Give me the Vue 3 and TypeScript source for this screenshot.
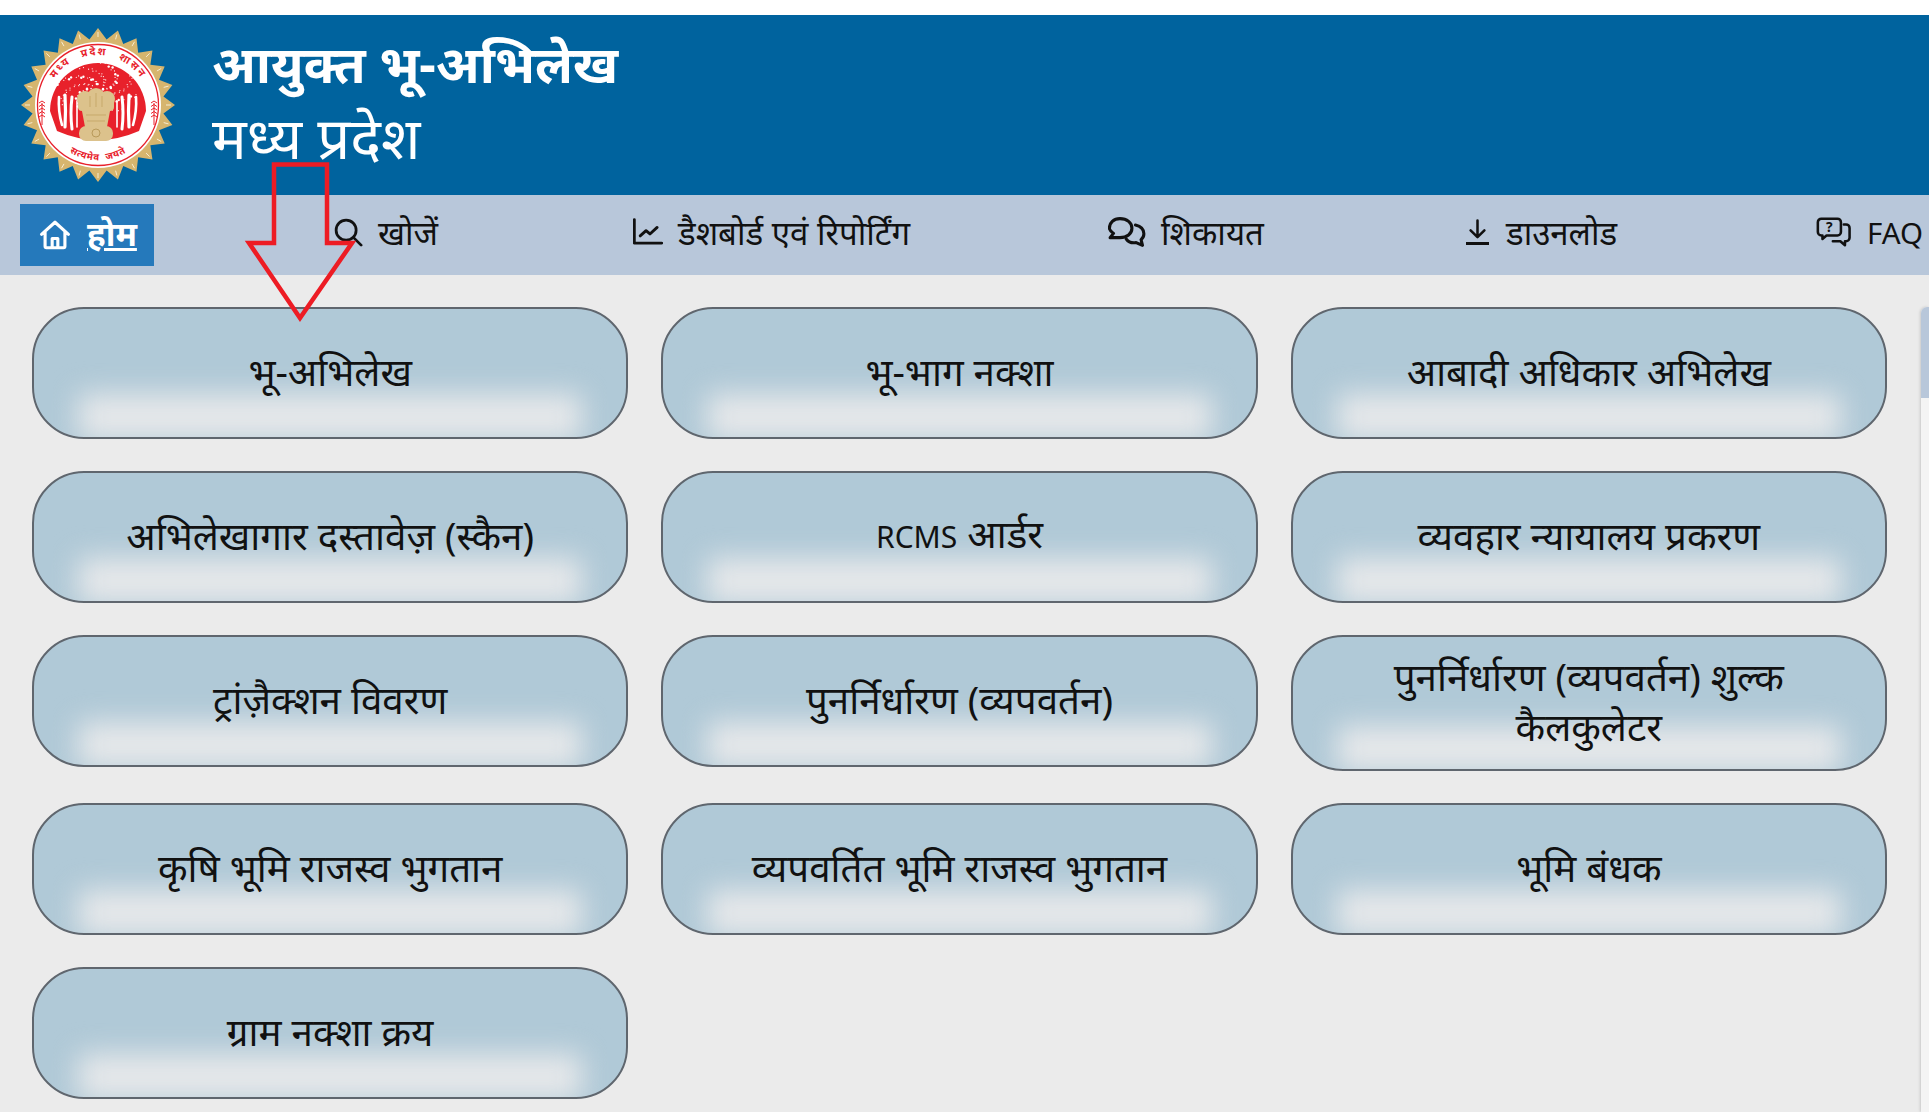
<script setup lang="ts">
interface Card { label: string; latin?: string }

const cards: Card[] = [
  { label: 'भू-अभिलेख' },
  { label: 'भू-भाग नक्शा' },
  { label: 'आबादी अधिकार अभिलेख' },
  { label: 'अभिलेखागार दस्तावेज़ (स्कैन)' },
  { label: ' आर्डर', latin: 'RCMS' },
  { label: 'व्यवहार न्यायालय प्रकरण' },
  { label: 'ट्रांज़ैक्शन विवरण' },
  { label: 'पुनर्निर्धारण (व्यपवर्तन)' },
  { label: 'पुनर्निर्धारण (व्यपवर्तन) शुल्क\nकैलकुलेटर' },
  { label: 'कृषि भूमि राजस्व भुगतान' },
  { label: 'व्यपवर्तित भूमि राजस्व भुगतान' },
  { label: 'भूमि बंधक' },
  { label: 'ग्राम नक्शा क्रय' },
]

const toXY = (r: number, deg: number): string => {
  const a = (deg * Math.PI) / 180
  return `${(80 + r * Math.cos(a)).toFixed(2)},${(80 + r * Math.sin(a)).toFixed(2)}`
}

const rayCount = 24
const sunPoints: string = Array.from({ length: rayCount * 2 }, (_, i) =>
  toXY(i % 2 === 0 ? 77 : 66, (i * 360) / (rayCount * 2) - 90),
).join(' ')

const ticks = Array.from({ length: rayCount }, (_, i) => {
  const deg = (i * 360) / rayCount - 90
  const [x1, y1] = toXY(73, deg).split(',')
  const [x2, y2] = toXY(68, deg).split(',')
  return { x1, y1, x2, y2 }
})

const leaves = Array.from({ length: 150 }, (_, i) => {
  const a = i * 2.399
  const r = 6 + ((i * 37) % 38)
  return {
    cx: (79 + r * Math.cos(a)).toFixed(1),
    cy: (64 + r * 0.62 * Math.sin(a)).toFixed(1),
    r: i % 4 === 0 ? 1.2 : 0.6,
  }
})

const grain = [0, 1, 2, 3, 4]
</script>

<template>
  <div class="page">
    <header class="banner">
      <svg class="seal" viewBox="0 0 160 160" role="img" aria-label="मध्य प्रदेश शासन">
        <polygon :points="sunPoints" fill="#d6b56e" />
        <line v-for="(t, i) in ticks" :key="i" :x1="t.x1" :y1="t.y1" :x2="t.x2" :y2="t.y2" stroke="#f6ecd2" stroke-width="1" />
        <circle cx="80" cy="80" r="63" fill="#fff" />
        <circle cx="80" cy="80" r="60.500" fill="none" stroke="#e8212b" stroke-width="1.300" />
        <path d="M32 86 A48 48 0 0 1 128 86 L121 106 Q80 124 39 106 Z" fill="#e8212b" />
        <g fill="none" stroke="#fff" stroke-linecap="round">
          <path d="M41 72 Q40 86 44 100" stroke-width="2.600" />
          <path d="M47 70 Q48 86 47 102" stroke-width="3.200" />
          <path d="M54 72 Q52 88 54 104" stroke-width="3" />
          <path d="M59 76 V102" stroke-width="1.600" />
          <path d="M99 76 V102" stroke-width="1.600" />
          <path d="M104 72 Q106 88 104 104" stroke-width="3" />
          <path d="M111 70 Q110 86 111 102" stroke-width="3.200" />
          <path d="M118 72 Q119 86 115 100" stroke-width="2.600" />
        </g>
        <circle v-for="(l, i) in leaves" :key="'l' + i" :cx="l.cx" :cy="l.cy" :r="l.r" fill="#fff" />
        <g v-for="n in grain" :key="'g' + n" fill="none" stroke="#e8212b" stroke-width="1">
          <path :d="`M21 ${78 + n * 3.500} l3 -2 l3 2`" />
          <path :d="`M133 ${78 + n * 3.500} l3 -2 l3 2`" />
        </g>
        <path d="M24 78 V100 M136 78 V100" stroke="#e8212b" stroke-width="1" />
        <g fill="#dcc28c">
          <circle cx="67" cy="74" r="8" />
          <circle cx="78" cy="72" r="9" />
          <circle cx="89" cy="74" r="8" />
          <rect x="60" y="74" width="36" height="12" rx="4" />
          <path d="M64 86 H92 L89 102 H67 Z" />
          <rect x="61" y="101" width="34" height="15" rx="7" />
        </g>
        <circle cx="78" cy="108" r="4" fill="none" stroke="#b99a5a" stroke-width="1" />
        <path d="M68 90 H88 M69 96 H87 M72 71 V82 M78 68 V82 M84 71 V82" stroke="#c7a96a" stroke-width="1" />
        <path id="sealTop" d="M29.500 88 A51 51 0 1 1 130.500 88" fill="none" />
        <path id="sealBottom" d="M36 112 A53 53 0 0 0 124 112" fill="none" />
        <text class="seal-text" fill="#e8212b"><textPath href="#sealTop" startOffset="50%" text-anchor="middle">मध्य प्रदेश शासन</textPath></text>
        <text class="seal-text small" fill="#e8212b"><textPath href="#sealBottom" startOffset="50%" text-anchor="middle">सत्यमेव जयते</textPath></text>
      </svg>
      <div class="titles">
        <div class="title">आयुक्त भू-अभिलेख</div>
        <div class="subtitle">मध्य प्रदेश</div>
      </div>
    </header>

    <nav class="nav">
      <a class="nav-item home">
        <svg class="ico home-ico" viewBox="0 0 24 24"><path d="M2.500 11.500 12 3l9.500 8.500M5 9.500V20a1 1 0 0 0 1 1h12a1 1 0 0 0 1-1V9.500M10 21v-6.500h4V21" /></svg>
        <span class="home-label">होम</span>
      </a>
      <a class="nav-item tight">
        <svg class="ico big" viewBox="0 0 24 24"><circle cx="10.500" cy="10.500" r="8" /><path d="m16.500 16.500 6 6" /></svg>
        <span>खोजें</span>
      </a>
      <a class="nav-item tight">
        <svg class="ico big" viewBox="1 2 23 21"><path d="M2 3v18h21" /><path d="m6.500 15.500 4.500-4 3 2.500 5.500-5" /></svg>
        <span>डैशबोर्ड एवं रिपोर्टिंग</span>
      </a>
      <a class="nav-item tight">
        <svg class="ico wide" viewBox="1 2 27 21"><path d="M9.500 3c5 0 8.500 3 8.500 6.800s-3.500 6.700-8.500 6.700H2.500l2.400-3C3 12 2 11 2 9.800 2 6 5 3 9.500 3Z" /><path d="M20.500 7.500c3.600.8 6 3.200 6 6.300 0 1.700-.8 3.200-2 4.200l1 4-4.500-2c-2.500.4-5.500-.3-7-2.500" /></svg>
        <span>शिकायत</span>
      </a>
      <a class="nav-item">
        <svg class="ico dl" viewBox="2 1 20 22"><path d="M12 2v14M6 10.500l6 6 6-6" /><path class="heavy" d="M2.500 22h19" /></svg>
        <span>डाउनलोड</span>
      </a>
      <a class="nav-item faq">
        <svg class="ico wide" viewBox="0 0 30 26">
          <path d="M4 1.500h14a3 3 0 0 1 3 3v8.500a3 3 0 0 1-3 3H8.500l-3.500 3v-3H4a3 3 0 0 1-3-3V4.500a3 3 0 0 1 3-3Z" />
          <path d="M23.500 6.500h2a3 3 0 0 1 3 3V18a3 3 0 0 1-3 3h-1v3.500L20.500 21H14" />
          <text class="faq-mark" x="11" y="13" text-anchor="middle">?</text>
        </svg>
        <span class="latin">FAQ</span>
      </a>
    </nav>

    <main class="cards">
      <button v-for="c in cards" :key="c.label" type="button" class="card">
        <span class="card-label"><span v-if="c.latin" class="card-latin">{{ c.latin }}</span>{{ c.label }}</span>
      </button>
    </main>

    <svg class="arrow" viewBox="0 0 114 165" aria-hidden="true">
      <path d="M30 4.500 H83 V83 H108 L56 158 L5 83 H30 Z" />
    </svg>
    <div class="scroll-rail"><div class="scroll-thumb"></div></div>
  </div>
</template>

<style scoped>
.page {
  position: relative;
  height: 1112px;
  padding-top: 15px;
  box-sizing: border-box;
  overflow: hidden;
  background: #ebebeb;
  font-family: "Noto Sans", "Noto Sans CJK SC", sans-serif;
  color: #111;
}
.page::before {
  content: "";
  position: absolute;
  left: 0;
  right: 0;
  top: 0;
  height: 15px;
  background: #fff;
}
.banner {
  height: 180px;
  background: #00639e;
  color: #fff;
  display: flex;
  align-items: center;
  gap: 34px;
  padding-left: 18px;
}
.seal {
  width: 160px;
  height: 160px;
  flex: none;
}
.seal-text {
  font-size: 10.500px;
  font-weight: 700;
  letter-spacing: 1.800px;
  word-spacing: 7px;
}
.seal-text.small {
  font-size: 9.500px;
  letter-spacing: 0.800px;
  word-spacing: 3px;
}
.titles {
  display: flex;
  flex-direction: column;
  gap: 6px;
  padding-bottom: 12px;
}
.title {
  font-size: 51.500px;
  font-weight: 700;
  line-height: 70px;
}
.subtitle {
  font-size: 58px;
  line-height: 66px;
}
.nav {
  height: 80px;
  background: #b8c7da;
  display: grid;
  grid-template-columns: 313px 300px 475px 358px 349px 1fr;
  align-items: center;
  padding-left: 20px;
  font-size: 33px;
  white-space: nowrap;
}
.nav-item {
  display: flex;
  align-items: center;
  gap: 17px;
  padding-bottom: 6px;
  color: #111;
}
.nav-item.tight {
  gap: 15px;
}
.home {
  width: 134px;
  height: 62px;
  box-sizing: border-box;
  padding-left: 18px;
  padding-bottom: 0;
  gap: 15px;
  background: #2579bb;
  color: #fff;
  font-weight: 700;
}
.home-label {
  text-decoration: underline;
  padding-bottom: 4px;
}
.ico {
  width: 28px;
  height: 28px;
  flex: none;
  fill: none;
  stroke: currentColor;
  stroke-width: 2.200;
  stroke-linecap: round;
  stroke-linejoin: round;
}
.ico.big {
  width: 30px;
  height: 30px;
}
.ico.wide {
  width: 38px;
  height: 30px;
}
.ico.dl {
  width: 23px;
  height: 28px;
}
.home-ico {
  width: 34px;
  height: 34px;
}
.heavy {
  stroke-width: 2.800;
}
.faq-mark {
  font-size: 12px;
  font-weight: 700;
  fill: currentColor;
  stroke: none;
}
.latin {
  font-size: 29.500px;
}
.faq {
  gap: 14px;
}
.cards {
  display: grid;
  grid-template-columns: repeat(3, 1fr);
  align-items: start;
  gap: 32px 33px;
  padding: 32px 42px 0 32px;
}
.card {
  position: relative;
  min-height: 132px;
  box-sizing: border-box;
  padding: 14px 20px 18px;
  display: flex;
  align-items: center;
  justify-content: center;
  border: 2px solid #5f666e;
  border-radius: 52px;
  background: #b0c9d7;
  overflow: hidden;
  font: inherit;
  font-size: 38.500px;
  line-height: 50px;
  color: #111;
}
.card::after {
  content: "";
  position: absolute;
  left: 44px;
  right: 44px;
  bottom: -3px;
  height: 46px;
  background: #e6e8ea;
  filter: blur(14px);
}
.card-label {
  position: relative;
  z-index: 1;
  white-space: pre-line;
}
.card-latin {
  font-size: 30px;
}
.arrow {
  position: absolute;
  left: 244px;
  top: 160px;
  width: 114px;
  height: 165px;
  fill: none;
  stroke: #ed1c24;
  stroke-width: 4.500;
  stroke-linejoin: miter;
  pointer-events: none;
}
.scroll-rail {
  position: absolute;
  right: 0;
  top: 307px;
  bottom: 0;
  width: 8px;
  background: #f4f4f4;
  border-radius: 6px 0 0 0;
  box-shadow: -1px 0 3px rgba(0, 0, 0, 0.15);
  overflow: hidden;
}
.scroll-thumb {
  height: 91px;
  background: #b8c7da;
}
</style>
<style>
html,
body {
  overflow: hidden;
}
</style>
